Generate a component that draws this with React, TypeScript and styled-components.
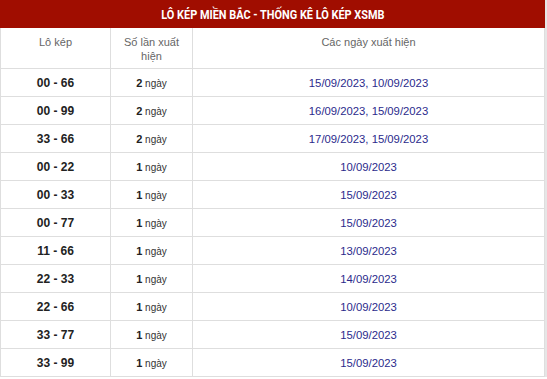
import React from "react";
import styled, { createGlobalStyle } from "styled-components";

const Global = createGlobalStyle`
  html, body { margin: 0; padding: 0; background: #fff; }
  body { font-family: "Liberation Sans", Arial, sans-serif; }
`;

const Wrap = styled.div`
  width: 545px;
  border-right: 2px solid #e6e6e6;
`;

const Title = styled.div`
  background: #a00d00;
  color: #fff;
  height: 28px;
  display: flex;
  align-items: center;
  justify-content: center;
  font-family: Roboto, "Liberation Sans", sans-serif;
  font-weight: 700;
  font-size: 13px;
`;

const TitleText = styled.span`
  display: inline-block;
  transform: scaleX(0.84);
  white-space: nowrap;
`;

const Table = styled.table`
  width: 545px;
  border-collapse: collapse;
  table-layout: fixed;
`;

const Th = styled.th`
  border: 1px solid #dedede;
  border-top: none;
  color: #666;
  font-weight: 400;
  font-size: 11px;
  line-height: 14px;
  vertical-align: top;
  padding: 7px 8px 5px;
  height: 28px;
`;

const Td = styled.td`
  border: 1px solid #dedede;
  height: 27px;
  padding: 0 4px;
  text-align: center;
  vertical-align: middle;
`;

const Pair = styled(Td)`
  font-weight: 700;
  font-size: 12px;
  color: #222;
`;

const Count = styled(Td)`
  font-size: 10px;
  color: #333;
  b { font-size: 11px; color: #222; }
`;

const Dates = styled(Td)`
  font-size: 11.3px;
  color: #2b2a8c;
`;

const rows: [string, number, string][] = [
  ["00 - 66", 2, "15/09/2023, 10/09/2023"],
  ["00 - 99", 2, "16/09/2023, 15/09/2023"],
  ["33 - 66", 2, "17/09/2023, 15/09/2023"],
  ["00 - 22", 1, "10/09/2023"],
  ["00 - 33", 1, "15/09/2023"],
  ["00 - 77", 1, "15/09/2023"],
  ["11 - 66", 1, "13/09/2023"],
  ["22 - 33", 1, "14/09/2023"],
  ["22 - 66", 1, "10/09/2023"],
  ["33 - 77", 1, "15/09/2023"],
  ["33 - 99", 1, "15/09/2023"],
];

export default function App() {
  return (
    <Wrap>
      <Global />
      <Title>
        <TitleText>LÔ KÉP MIỀN BẮC - THỐNG KÊ LÔ KÉP XSMB</TitleText>
      </Title>
      <Table>
        <colgroup>
          <col style={{ width: 110 }} />
          <col style={{ width: 82 }} />
          <col />
        </colgroup>
        <thead>
          <tr>
            <Th>Lô kép</Th>
            <Th>Số lần xuất hiện</Th>
            <Th>Các ngày xuất hiện</Th>
          </tr>
        </thead>
        <tbody>
          {rows.map(([p, c, d]) => (
            <tr key={p}>
              <Pair>{p}</Pair>
              <Count>
                <b>{c}</b> ngày
              </Count>
              <Dates>{d}</Dates>
            </tr>
          ))}
        </tbody>
      </Table>
    </Wrap>
  );
}
